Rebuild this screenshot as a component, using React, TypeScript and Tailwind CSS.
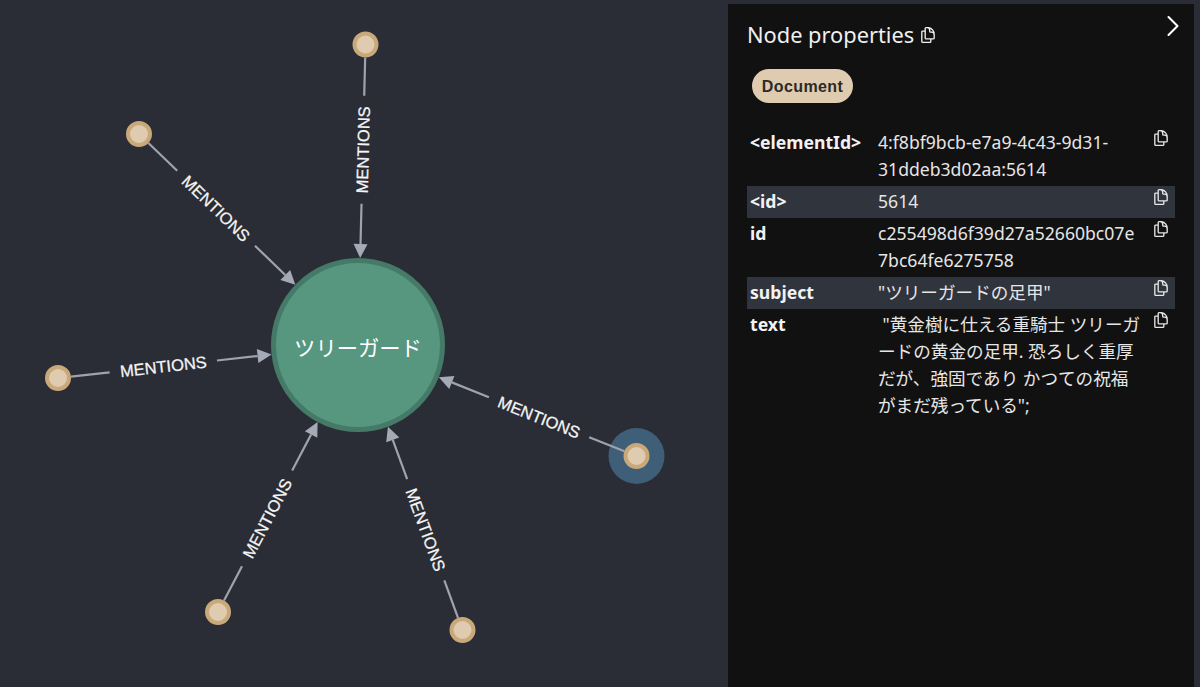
import { ChevronRight } from 'lucide-react';
import { HiOutlineDocumentDuplicate } from 'react-icons/hi2';

const CENTER = { x: 358, y: 345, r: 87 };
const NODE_R = 13;

const NODES = [
  { x: 365.5, y: 44.5 },
  { x: 139, y: 134 },
  { x: 58, y: 378 },
  { x: 218, y: 612 },
  { x: 462.5, y: 630 },
  { x: 636.5, y: 456 },
];

const PROPS: { name: string; value: string; striped?: boolean; breakAll?: boolean }[] = [
  { name: '<elementId>', value: '4:f8bf9bcb-e7a9-4c43-9d31-31ddeb3d02aa:5614' },
  { name: '<id>', value: '5614', striped: true },
  { name: 'id', value: 'c255498d6f39d27a52660bc07e7bc64fe6275758', breakAll: true },
  { name: 'subject', value: '"ツリーガードの足甲"', striped: true },
  {
    name: 'text',
    value: ' "黄金樹に仕える重騎士 ツリーガードの黄金の足甲. 恐ろしく重厚だが、強固であり かつての祝福がまだ残っている";',
  },
];

function Edge({ x, y }: { x: number; y: number }) {
  const dx = CENTER.x - x;
  const dy = CENTER.y - y;
  const len = Math.hypot(dx, dy);
  const ux = dx / len;
  const uy = dy / len;
  const at = (d: number) => ({ x: x + ux * d, y: y + uy * d });

  const tipAt = len - CENTER.r;
  const lineEnd = tipAt - 14;
  const mid = (NODE_R + lineEnd) / 2 - 1;
  const a = at(NODE_R);
  const b = at(mid - 54);
  const c = at(mid + 54);
  const d = at(lineEnd);
  const tip = at(tipAt);
  const label = at(mid);
  const nx = -uy * 7;
  const ny = ux * 7;

  let deg = (Math.atan2(dy, dx) * 180) / Math.PI;
  if (deg > 90) deg -= 180;
  if (deg < -90) deg += 180;

  return (
    <g>
      <line x1={a.x} y1={a.y} x2={b.x} y2={b.y} stroke="#9fa3ac" strokeWidth={2.2} />
      <line x1={c.x} y1={c.y} x2={d.x} y2={d.y} stroke="#9fa3ac" strokeWidth={2.2} />
      <polygon
        points={`${tip.x},${tip.y} ${d.x + nx},${d.y + ny} ${d.x - nx},${d.y - ny}`}
        fill="#a5abb6"
      />
      <text
        x={label.x}
        y={label.y}
        transform={`rotate(${deg} ${label.x} ${label.y})`}
        textAnchor="middle"
        dominantBaseline="central"
        fontSize={16.5}
        fontFamily='"Liberation Sans", Arial, sans-serif'
        fill="#f5f5f5"
        stroke="#f5f5f5"
        strokeWidth={0.25}
      >
        MENTIONS
      </text>
    </g>
  );
}

function Graph() {
  return (
    <svg width={728} height={687} viewBox="0 0 728 687" className="block">
      <circle cx={636.5} cy={456} r={28} fill="#3f5e78" />
      {NODES.map((n) => (
        <Edge key={`${n.x}-${n.y}`} x={n.x} y={n.y} />
      ))}
      <circle cx={CENTER.x} cy={CENTER.y} r={84.5} fill="#57967f" stroke="#447a67" strokeWidth={5} />
      <text
        x={CENTER.x}
        y={CENTER.y + 1}
        textAnchor="middle"
        dominantBaseline="central"
        fontSize={21.3}
        fontFamily='"Noto Sans CJK JP", sans-serif'
        fill="#ffffff"
      >
        ツリーガード
      </text>
      {NODES.map((n) => (
        <circle
          key={`${n.x}-${n.y}`}
          cx={n.x}
          cy={n.y}
          r={11}
          fill="#dfcbaf"
          stroke="#c9a97a"
          strokeWidth={4}
        />
      ))}
    </svg>
  );
}

function PropRow({ name, value, striped, breakAll }: (typeof PROPS)[number]) {
  return (
    <div className={`flex pb-[3.5px] pt-[1.5px] ${striped ? 'bg-[#30343d]' : ''}`}>
      <div className="w-[131px] shrink-0 pl-[3px] font-bold text-[#f2f2f2]">{name}</div>
      <div className={`w-[266px] shrink-0 whitespace-pre-wrap text-[#e6e6e6] ${breakAll ? 'break-all' : ''}`}>
        {value}
      </div>
      <div className="flex-1 pl-[7.5px] text-[#e6e6e6]">
        <HiOutlineDocumentDuplicate size={18} strokeWidth={1.8} />
      </div>
    </div>
  );
}

export default function App() {
  return (
    <div className="flex h-[687px] w-[1200px] overflow-hidden bg-[#2a2d35]">
      <div className="w-[728px] shrink-0">
        <Graph />
      </div>
      <div className="relative mt-1 w-[466px] shrink-0 bg-[#111112] px-[19px] font-['Noto_Sans','Noto_Sans_CJK_JP',sans-serif]">
        <ChevronRight
          size={36}
          strokeWidth={1.4}
          className="absolute right-[3px] top-[4px] text-white"
        />
        <div className="flex items-center gap-[5px] pt-[15px] text-[21.8px] leading-[32px] text-[#f0f0f0]">
          Node properties
          <HiOutlineDocumentDuplicate size={18} strokeWidth={1.8} />
        </div>
        <div className="mt-[18px] pl-[5px]">
          <span className="inline-flex h-[34px] w-[101px] items-center justify-center rounded-full bg-[#dfcbaf] pt-[1px] font-['Liberation_Sans',sans-serif] text-[16px] font-bold tracking-[0.4px] text-[#2a2a2a]">
            Document
          </span>
        </div>
        <div className="mt-[24px] text-[17.6px] leading-[27px]">
          {PROPS.map((p) => (
            <PropRow key={p.name} {...p} />
          ))}
        </div>
      </div>
    </div>
  );
}
